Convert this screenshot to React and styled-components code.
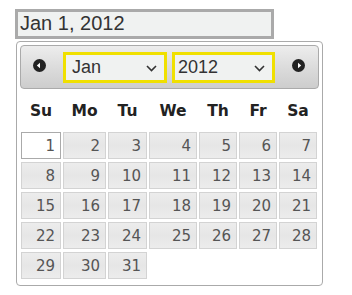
import styled, { createGlobalStyle } from "styled-components";
import { useState } from "react";

const GlobalStyle = createGlobalStyle`
  body {
    margin: 0;
    background: #ffffff;
    font-family: "Liberation Sans", Arial, sans-serif;
  }
`;

const Page = styled.div`
  padding: 9px 0 0 15px;
`;

const DateInput = styled.input`
  box-sizing: border-box;
  display: block;
  width: 259px;
  height: 30px;
  margin: 0;
  padding: 0 0 1px 2px;
  border: 3px solid #aaaaaa;
  background: #f0f2f1;
  color: #333333;
  font-family: "Liberation Sans", Arial, sans-serif;
  font-size: 20px;
  outline: none;
`;

const Popup = styled.div`
  box-sizing: border-box;
  width: 307px;
  margin: 2px 0 0 1px;
  padding: 3px 3px 6px 3px;
  border: 1px solid #aaaaaa;
  border-radius: 4px;
  background: #ffffff;
  font-family: "DejaVu Sans", Verdana, sans-serif;
`;

const Header = styled.div`
  box-sizing: border-box;
  display: flex;
  align-items: center;
  height: 44px;
  padding-left: 12px;
  border: 1px solid #aaaaaa;
  border-radius: 4px;
  background: linear-gradient(to bottom, #ededed 0%, #dcdcdc 50%, #cdcdcd 100%);
`;

const NavButton = styled.button`
  display: flex;
  width: 13px;
  height: 13px;
  margin-bottom: 4px;
  padding: 0;
  border: 0;
  background: none;
  cursor: pointer;
`;

const Title = styled.div`
  display: flex;
  gap: 5px;
  margin: 0 17px 0 17px;
`;

const SelectWrap = styled.div`
  position: relative;
  width: ${(p) => p.$width}px;
`;

const Select = styled.select`
  box-sizing: border-box;
  width: 100%;
  height: 31px;
  margin: 0;
  padding: 0 0 0 ${(p) => p.$indent}px;
  border: 3px solid #f0e000;
  border-radius: 0;
  background: #f0f2f1;
  color: #333333;
  font-family: "Liberation Sans", Arial, sans-serif;
  font-size: 18px;
  appearance: none;
  outline: none;
`;

const Chevron = styled.svg`
  position: absolute;
  right: 10px;
  top: 13px;
  pointer-events: none;
`;

const Days = styled.div`
  display: grid;
  grid-template-columns: 40px 43px 39px 48px 38px 38px 38px;
  column-gap: 2px;
  row-gap: 3px;
  padding: 0 1px;
`;

const WeekDay = styled.div`
  display: flex;
  align-items: center;
  justify-content: center;
  height: 37px;
  padding-top: 3px;
  color: #222222;
  font-size: 15.5px;
  font-weight: bold;
`;

const Day = styled.a`
  box-sizing: border-box;
  display: flex;
  align-items: center;
  justify-content: flex-end;
  height: 27px;
  padding-right: 5px;
  border: 1px solid ${(p) => (p.$active ? "#aaaaaa" : "#d3d3d3")};
  background: ${(p) =>
    p.$active
      ? "#ffffff"
      : "linear-gradient(to bottom, #ececec 0%, #e6e6e6 50%, #ececec 100%)"};
  color: #555555;
  font-size: 15px;
  text-decoration: none;
  cursor: pointer;
`;

const MONTHS = ["Jan", "Feb", "Mar", "Apr", "May", "Jun", "Jul", "Aug", "Sep", "Oct", "Nov", "Dec"];
const WEEKDAYS = ["Su", "Mo", "Tu", "We", "Th", "Fr", "Sa"];

const PrevIcon = () => (
  <svg width="13" height="13" viewBox="0 0 13 13">
    <circle cx="6.5" cy="6.5" r="6.5" fill="#222222" />
    <polygon points="3.8,6.5 7,3.8 7,9.2" fill="#ffffff" />
  </svg>
);

const NextIcon = () => (
  <svg width="13" height="13" viewBox="0 0 13 13">
    <circle cx="6.5" cy="6.5" r="6.5" fill="#222222" />
    <polygon points="9.2,6.5 6,3.8 6,9.2" fill="#ffffff" />
  </svg>
);

const ChevronIcon = () => (
  <Chevron width="11" height="7" viewBox="0 0 11 7">
    <polyline points="1,1 5.5,5.5 10,1" fill="none" stroke="#333333" strokeWidth="1.6" />
  </Chevron>
);

const App = () => {
  const [month, setMonth] = useState(0);
  const [year, setYear] = useState(2012);
  const [day, setDay] = useState(1);

  const first = new Date(year, month, 1).getDay();
  const count = new Date(year, month + 1, 0).getDate();
  const cells = [];
  for (let i = 0; i < first; i++) cells.push(null);
  for (let d = 1; d <= count; d++) cells.push(d);

  const shift = (n) => {
    const m = month + n;
    setMonth((m + 12) % 12);
    setYear(year + Math.floor(m / 12));
  };

  return (
    <Page>
      <GlobalStyle />
      <DateInput readOnly value={`${MONTHS[month]} ${day}, ${year}`} />
      <Popup>
        <Header>
          <NavButton onClick={() => shift(-1)} aria-label="Prev">
            <PrevIcon />
          </NavButton>
          <Title>
            <SelectWrap $width={104}>
              <Select $indent={6} value={month} onChange={(e) => setMonth(Number(e.target.value))}>
                {MONTHS.map((m, i) => (
                  <option key={m} value={i}>{m}</option>
                ))}
              </Select>
              <ChevronIcon />
            </SelectWrap>
            <SelectWrap $width={103}>
              <Select $indent={3} value={year} onChange={(e) => setYear(Number(e.target.value))}>
                {Array.from({ length: 21 }, (_, i) => 2002 + i).map((y) => (
                  <option key={y} value={y}>{y}</option>
                ))}
              </Select>
              <ChevronIcon />
            </SelectWrap>
          </Title>
          <NavButton onClick={() => shift(1)} aria-label="Next">
            <NextIcon />
          </NavButton>
        </Header>
        <Days>
          {WEEKDAYS.map((w) => (
            <WeekDay key={w}>{w}</WeekDay>
          ))}
          {cells.map((d, i) =>
            d ? (
              <Day key={i} $active={d === day} onClick={() => setDay(d)}>
                {d}
              </Day>
            ) : (
              <span key={i} />
            )
          )}
        </Days>
      </Popup>
    </Page>
  );
};

export default App;
